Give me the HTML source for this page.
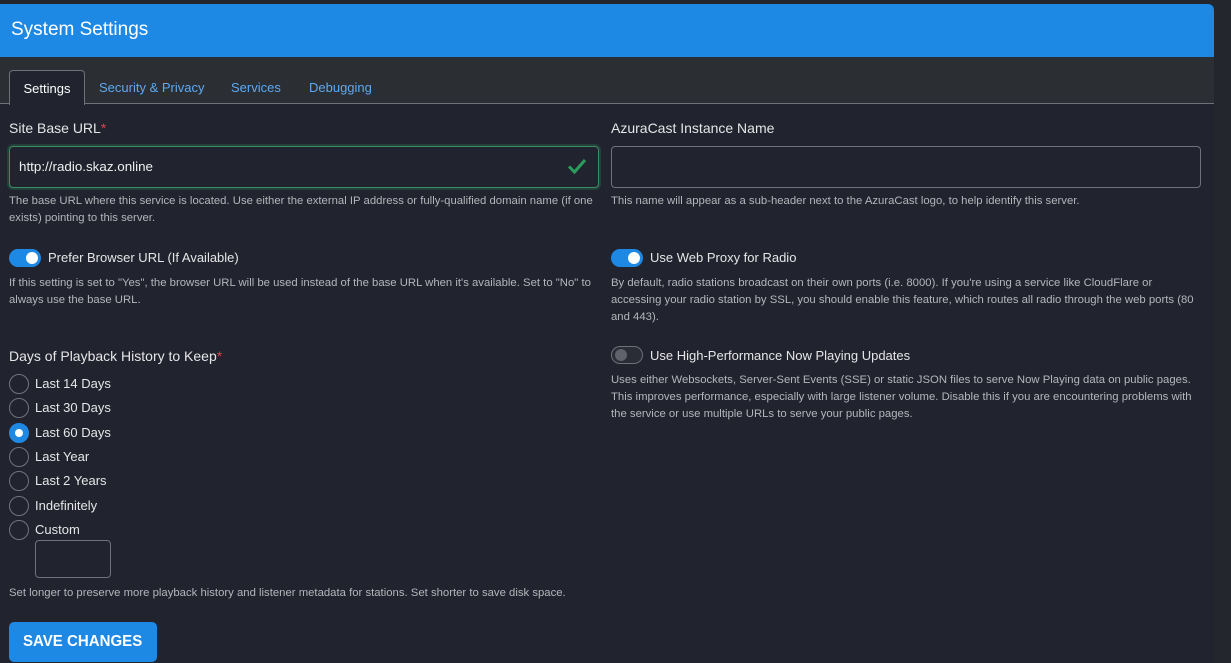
<!DOCTYPE html>
<html><head><style>
*{box-sizing:border-box;margin:0;padding:0}
html,body{width:1231px;height:663px;overflow:hidden}
body{background:#24262e;font-family:"Liberation Sans",sans-serif;color:#e6e6e8;position:relative}
.card{position:absolute;left:0;top:4px;width:1214px;height:670px;background:#21232e;border-top-right-radius:6px;overflow:hidden}
.hdr{height:53px;background:#1e88e5;color:#fff;font-size:19px;padding:15px 0 0 11px}
.tabs{height:47px;background:#2b2f33;border-bottom:1px solid #6c717a;position:relative}
.tab{position:absolute;top:23px;font-size:13px;color:#5ea8f2}
.tab.act{left:9px;top:13px;width:76px;height:35px;background:#21232e;border:1px solid #6c717a;border-bottom:none;border-radius:4px 4px 0 0;color:#fff;text-align:center;padding-top:10px}
.a{position:absolute;white-space:nowrap;transform-origin:left top}
.lbl{font-size:14px;color:#e6e6e8}
.req{color:#e0404a}
.help{font-size:11px;color:#b4b6bc;line-height:17px;transform:scaleX(1.03)}
.inp{position:absolute;height:42px;border:1px solid #6c717a;border-radius:4px}
.tg{position:absolute;width:32px;height:18px;border-radius:9px;background:#1e88e5}
.tg::after{content:"";position:absolute;top:3px;right:3px;width:12px;height:12px;border-radius:50%;background:#fff}
.tg.off{background:#2a2c36;border:1px solid #6c717a}
.tg.off::after{left:3px;top:2px;background:#5f626b}
.tl{font-size:13px;color:#e6e6e8}
.rd{position:absolute;left:9px;width:20px;height:20px;border:1px solid #70747c;border-radius:50%}
.rd.on{background:#1e88e5;border-color:#1e88e5}
.rd.on::after{content:"";position:absolute;left:5px;top:5px;width:8px;height:8px;border-radius:50%;background:#fff}
.rl{position:absolute;left:35px;font-size:13px;color:#e6e6e8;white-space:nowrap}
</style></head><body>
<div class="card">
<div class="hdr">System Settings</div>
<div class="tabs">
<div class="tab act">Settings</div>
<div class="tab" style="left:99px">Security &amp; Privacy</div>
<div class="tab" style="left:231px">Services</div>
<div class="tab" style="left:309px">Debugging</div>
</div>
</div>
<div class="a lbl" style="left:9px;top:120px">Site Base URL<span class="req">*</span></div>
<div class="inp" style="left:9px;top:146px;width:590px;border-color:#3c8d62;box-shadow:0 0 0 2px rgba(40,120,80,.35)"></div>
<div class="a" style="left:19px;top:159px;font-size:13px;color:#f0f0f0;transform:scaleX(1.03)">http://radio.skaz.online</div>
<svg class="a" style="left:567px;top:157px" width="20" height="18" viewBox="0 0 20 18"><path d="M2 9.5 L7.5 15 L18 3" stroke="#2a9d5c" stroke-width="3" fill="none"/></svg>
<div class="a help" style="left:9px;top:193px">The base URL where this service is located. Use either the external IP address or fully-qualified domain name (if one<br>exists) pointing to this server.</div>
<div class="a lbl" style="left:611px;top:120px">AzuraCast Instance Name</div>
<div class="inp" style="left:611px;top:146px;width:590px"></div>
<div class="a help" style="left:611px;top:193px">This name will appear as a sub-header next to the AzuraCast logo, to help identify this server.</div>

<div class="tg" style="left:9px;top:249px"></div>
<div class="a tl" style="left:48px;top:250px">Prefer Browser URL (If Available)</div>
<div class="a help" style="left:9px;top:275px">If this setting is set to "Yes", the browser URL will be used instead of the base URL when it's available. Set to "No" to<br>always use the base URL.</div>

<div class="tg" style="left:611px;top:249px"></div>
<div class="a tl" style="left:650px;top:250px">Use Web Proxy for Radio</div>
<div class="a help" style="left:611px;top:275px">By default, radio stations broadcast on their own ports (i.e. 8000). If you're using a service like CloudFlare or<br>accessing your radio station by SSL, you should enable this feature, which routes all radio through the web ports (80<br>and 443).</div>

<div class="tg off" style="left:611px;top:346px"></div>
<div class="a tl" style="left:650px;top:348px">Use High-Performance Now Playing Updates</div>
<div class="a help" style="left:611px;top:372px">Uses either Websockets, Server-Sent Events (SSE) or static JSON files to serve Now Playing data on public pages.<br>This improves performance, especially with large listener volume. Disable this if you are encountering problems with<br>the service or use multiple URLs to serve your public pages.</div>

<div class="a lbl" style="left:9px;top:348px">Days of Playback History to Keep<span class="req">*</span></div>
<div class="rd" style="top:374px"></div><div class="rl" style="top:376px">Last 14 Days</div>
<div class="rd" style="top:398px"></div><div class="rl" style="top:400px">Last 30 Days</div>
<div class="rd on" style="top:423px"></div><div class="rl" style="top:425px">Last 60 Days</div>
<div class="rd" style="top:447px"></div><div class="rl" style="top:449px">Last Year</div>
<div class="rd" style="top:471px"></div><div class="rl" style="top:473px">Last 2 Years</div>
<div class="rd" style="top:496px"></div><div class="rl" style="top:498px">Indefinitely</div>
<div class="rd" style="top:520px"></div><div class="rl" style="top:522px">Custom</div>
<div class="inp" style="left:35px;top:540px;width:76px;height:38px"></div>
<div class="a help" style="left:9px;top:585px">Set longer to preserve more playback history and listener metadata for stations. Set shorter to save disk space.</div>
<div class="a" style="left:9px;top:622px;width:148px;height:40px;background:#1e88e5;border-radius:5px"></div>
<div class="a" style="left:23px;top:633px;color:#fff;font-weight:bold;font-size:16px;transform:scaleX(.94)">SAVE CHANGES</div>
</body></html>
